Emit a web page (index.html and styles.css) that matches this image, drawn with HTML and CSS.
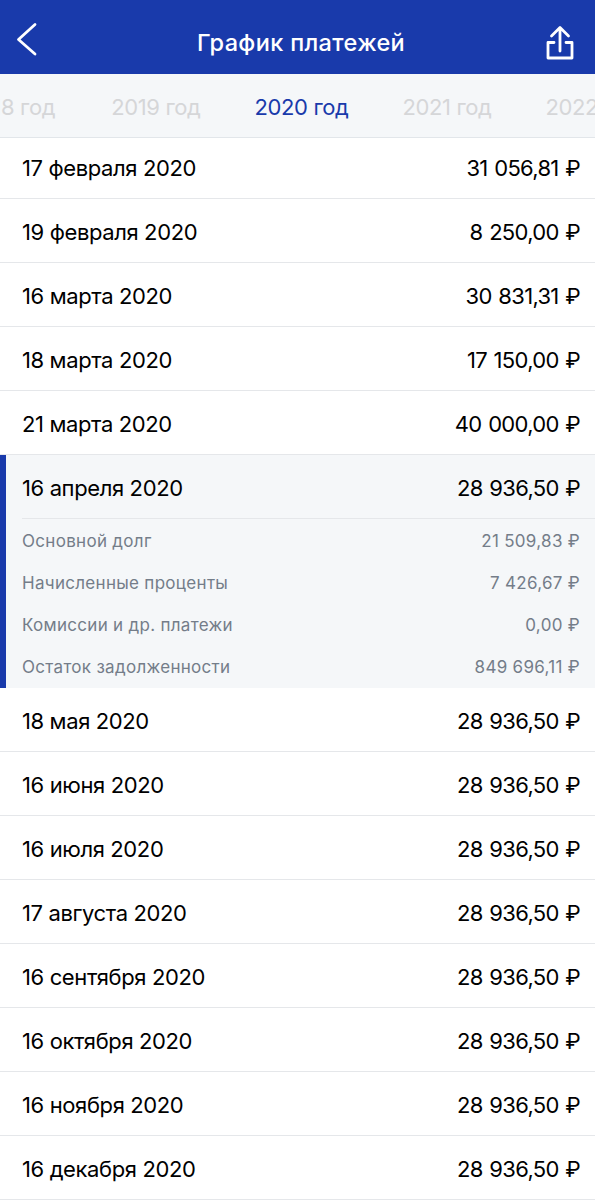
FILE: index.html
```html
<!DOCTYPE html>
<html lang="ru">
<head>
    <meta charset="UTF-8">
    <meta name="viewport" content="width=device-width, initial-scale=1.0">
    <title>График платежей</title>
    <link rel="stylesheet" href="styles.css">
</head>
<body>
    <header class="header">
        <svg class="icon-back" viewBox="0 0 24 36" fill="none" stroke="currentColor">
            <path d="M20 3.500L3.500 18.500L20 33"/>
        </svg>
        <h1 class="title">График платежей</h1>
        <svg class="icon-share" viewBox="0 0 30 36" fill="none" stroke="currentColor">
            <path d="M9 18.500H3V34H27V18.500H21"/>
            <path d="M15 27V4M6.500 12L15 3.500L23.500 12"/>
        </svg>
    </header>

    <nav class="years">
        <span class="year">2018 год</span>
        <span class="year">2019 год</span>
        <span class="year active">2020 год</span>
        <span class="year">2021 год</span>
        <span class="year">2022 год</span>
    </nav>

    <main class="payments">
        <div class="row first"><span>17 февраля 2020</span><span class="sum">31 056,81 ₽</span></div>
        <div class="row"><span>19 февраля 2020</span><span class="sum">8 250,00 ₽</span></div>
        <div class="row"><span>16 марта 2020</span><span class="sum">30 831,31 ₽</span></div>
        <div class="row"><span>18 марта 2020</span><span class="sum">17 150,00 ₽</span></div>
        <div class="row"><span>21 марта 2020</span><span class="sum">40 000,00 ₽</span></div>

        <!-- Expanded payment -->
        <section class="expanded">
            <div class="row"><span>16 апреля 2020</span><span class="sum">28 936,50 ₽</span></div>
            <div class="details">
                <div class="detail"><span>Основной долг</span><span>21 509,83 ₽</span></div>
                <div class="detail"><span>Начисленные проценты</span><span>7 426,67 ₽</span></div>
                <div class="detail"><span>Комиссии и др. платежи</span><span>0,00 ₽</span></div>
                <div class="detail"><span>Остаток задолженности</span><span>849 696,11 ₽</span></div>
            </div>
        </section>

        <div class="row"><span>18 мая 2020</span><span class="sum">28 936,50 ₽</span></div>
        <div class="row"><span>16 июня 2020</span><span class="sum">28 936,50 ₽</span></div>
        <div class="row"><span>16 июля 2020</span><span class="sum">28 936,50 ₽</span></div>
        <div class="row"><span>17 августа 2020</span><span class="sum">28 936,50 ₽</span></div>
        <div class="row"><span>16 сентября 2020</span><span class="sum">28 936,50 ₽</span></div>
        <div class="row"><span>16 октября 2020</span><span class="sum">28 936,50 ₽</span></div>
        <div class="row"><span>16 ноября 2020</span><span class="sum">28 936,50 ₽</span></div>
        <div class="row"><span>16 декабря 2020</span><span class="sum">28 936,50 ₽</span></div>
    </main>
</body>
</html>
```
FILE: styles.css
```css
* {
    margin: 0;
    padding: 0;
    box-sizing: border-box;
}

body {
    background: #fff;
    color: #000;
    font-family: Inter, "Liberation Sans", sans-serif;
    font-size: 22px;
    letter-spacing: -0.38px;
    overflow-x: hidden;
}

.header {
    display: flex;
    justify-content: space-between;
    height: 74px;
    padding: 21px 20px 0 15px;
    background: #193aab;
    color: #fff;
}

.title {
    padding-left: 18px;
    font-size: 23.5px;
    font-weight: 500;
    line-height: 43px;
    letter-spacing: 0.35px;
}

.icon-back {
    width: 24px;
    height: 36px;
    stroke-width: 2.8;
    stroke-linecap: round;
    stroke-linejoin: round;
}

.icon-share {
    width: 30px;
    height: 36px;
    margin-top: 3px;
    stroke-width: 2.8;
    stroke-linecap: round;
    stroke-linejoin: round;
}

.years {
    display: flex;
    justify-content: center;
    gap: 54px;
    height: 64px;
    padding-left: 10px;
    background: #f5f7f9;
    border-bottom: 1px solid #e2e6ea;
    line-height: 66px;
    overflow: hidden;
}

.year {
    flex: none;
    color: #d5d6d8;
    white-space: nowrap;
}

.year:first-child {
    margin-right: 2px;
}

.year.active {
    color: #193aab;
}

.row {
    display: flex;
    align-items: center;
    justify-content: space-between;
    height: 64px;
    padding: 2px 15px 0 22px;
    border-bottom: 1px solid #e5e7ea;
}

.row.first {
    height: 61px;
    padding-top: 0;
}

.sum {
    letter-spacing: -0.7px;
    word-spacing: 1.2px;
}

.expanded {
    height: 233px;
    padding-left: 16px;
    background: #f5f7f9;
    border-left: 6px solid #193aab;
}

.expanded .row {
    padding-left: 0;
}

.details {
    padding: 1px 15px 0 0;
}

.detail {
    display: flex;
    align-items: center;
    justify-content: space-between;
    height: 42px;
    color: #747d89;
    font-size: 17px;
    letter-spacing: 0.3px;
}
```
